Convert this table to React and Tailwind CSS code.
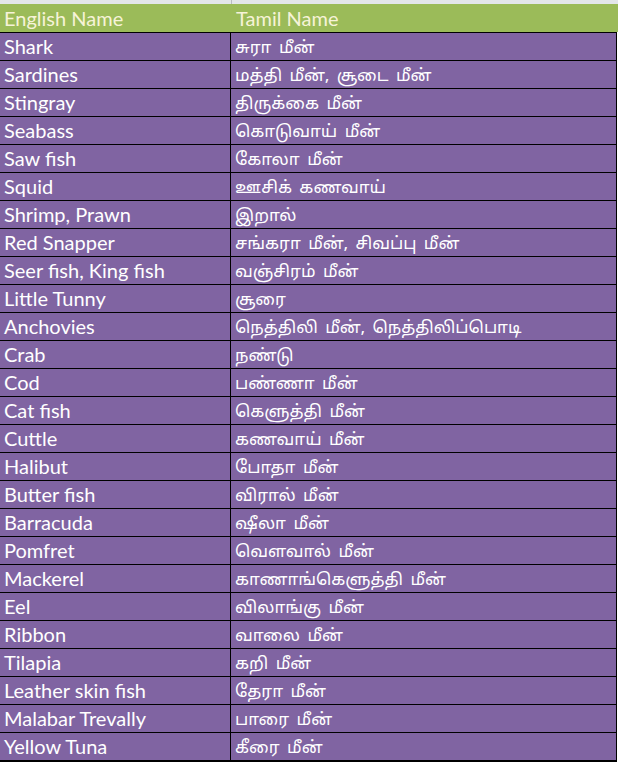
import React from 'react';

const fish = [
  ['Shark', 'சுரா மீன்'],
  ['Sardines', 'மத்தி மீன், சூடை மீன்'],
  ['Stingray', 'திருக்கை மீன்'],
  ['Seabass', 'கொடுவாய் மீன்'],
  ['Saw fish', 'கோலா மீன்'],
  ['Squid', 'ஊசிக் கணவாய்'],
  ['Shrimp, Prawn', 'இறால்'],
  ['Red Snapper', 'சங்கரா மீன், சிவப்பு மீன்'],
  ['Seer fish, King fish', 'வஞ்சிரம் மீன்'],
  ['Little Tunny', 'சூரை'],
  ['Anchovies', 'நெத்திலி மீன், நெத்திலிப்பொடி'],
  ['Crab', 'நண்டு'],
  ['Cod', 'பண்ணா மீன்'],
  ['Cat fish', 'கெளுத்தி மீன்'],
  ['Cuttle', 'கணவாய் மீன்'],
  ['Halibut', 'போதா மீன்'],
  ['Butter fish', 'விரால் மீன்'],
  ['Barracuda', 'ஷீலா மீன்'],
  ['Pomfret', 'வௌவால் மீன்'],
  ['Mackerel', 'காணாங்கெளுத்தி மீன்'],
  ['Eel', 'விலாங்கு மீன்'],
  ['Ribbon', 'வாலை மீன்'],
  ['Tilapia', 'கறி மீன்'],
  ['Leather skin fish', 'தேரா மீன்'],
  ['Malabar Trevally', 'பாரை மீன்'],
  ['Yellow Tuna', 'கீரை மீன்'],
];

const latin = { fontFamily: 'Lato, "Open Sans", sans-serif' };
const tamil = { fontFamily: '"Noto Sans Tamil", Lato, "Noto Sans", sans-serif' };

export default function App() {
  return (
    <div className="w-[618px] h-[762px] bg-white overflow-hidden flex flex-col">
      {/* sheet gridline strip */}
      <div className="h-[4px] grid grid-cols-[232px_1fr] bg-[#e3e6ea]">
        <div className="border-r border-[#b8bcc2]" />
        <div />
      </div>

      {/* header */}
      <div
        className="h-[28px] grid grid-cols-[231px_1fr] bg-[#9bbb59] text-[#f6f3d8] text-[20px] leading-none"
        style={latin}
      >
        <div className="flex items-end pl-[4px] pb-[4px]">English Name</div>
        <div className="flex items-end pl-[5px] pb-[4px]">Tamil Name</div>
      </div>

      {/* rows */}
      <div className="w-[617px] border-r border-black bg-[#8064a2] text-white">
        {fish.map(([en, ta]) => (
          <div key={en} className="h-[28px] grid grid-cols-[231px_1fr] border-t border-black">
            <div
              className="flex items-end pl-[4px] pb-[4px] text-[20px] leading-none border-r border-black"
              style={latin}
            >
              {en}
            </div>
            <div
              className="flex items-end pl-[4px] pb-[3px] text-[17px] leading-none [word-spacing:3px]"
              style={tamil}
            >
              {ta}
            </div>
          </div>
        ))}
        <div className="border-t-2 border-black" />
      </div>
    </div>
  );
}
